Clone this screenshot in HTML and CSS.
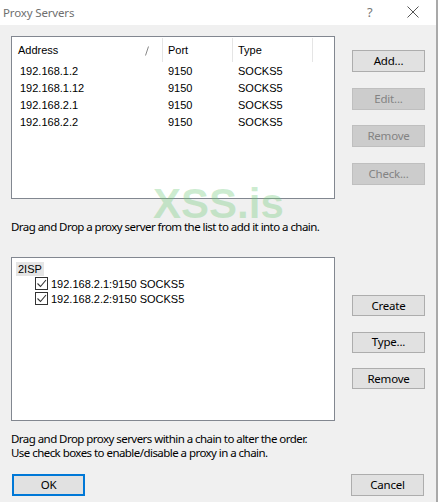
FILE: index.html
```html
<!DOCTYPE html>
<html>
<head>
<meta charset="utf-8">
<link rel="stylesheet" href="styles.css">
</head>
<body>
<div class="window">
  <div class="titlebar">
    <span class="title">Proxy Servers</span>
    <span class="help">?</span>
    <svg class="close" width="12" height="12" viewBox="0 0 12 12"><path d="M0.5 0.5 L11.5 11.5 M11.5 0.5 L0.5 11.5" stroke="#555" stroke-width="1" fill="none"/></svg>
  </div>
  <div class="content">
    <div class="section">
      <div class="listbox list-top">
        <div class="lv-header">
          <div class="col c-addr">Address<svg class="sort" width="4" height="10" viewBox="0 0 4 10"><path d="M3.5 0.5 L0.5 9.5" stroke="#888" stroke-width="1" fill="none"/></svg></div>
          <div class="col c-port">Port</div>
          <div class="col c-type">Type</div>
          <div class="col c-rest"></div>
        </div>
        <div class="lv-row"><span class="c-addr">192.168.1.2</span><span class="c-port">9150</span><span class="c-type">SOCKS5</span></div>
        <div class="lv-row"><span class="c-addr">192.168.1.12</span><span class="c-port">9150</span><span class="c-type">SOCKS5</span></div>
        <div class="lv-row"><span class="c-addr">192.168.2.1</span><span class="c-port">9150</span><span class="c-type">SOCKS5</span></div>
        <div class="lv-row"><span class="c-addr">192.168.2.2</span><span class="c-port">9150</span><span class="c-type">SOCKS5</span></div>
      </div>
      <div class="buttons btns-top">
        <button class="btn">Add...</button>
        <button class="btn disabled">Edit...</button>
        <button class="btn disabled">Remove</button>
        <button class="btn disabled">Check...</button>
      </div>
    </div>
    <p class="hint hint-top">Drag and Drop a proxy server from the list to add it into a chain.</p>
    <div class="section">
      <div class="listbox list-bottom">
        <div class="tree-root"><span class="root-label">2ISP</span></div>
        <div class="tree-item"><span class="chk"><svg width="11" height="11" viewBox="0 0 11 11"><path d="M1.5 5.5 L4.5 8.5 L10 2" stroke="#333" stroke-width="1.1" fill="none"/></svg></span><span class="item-text">192.168.2.1:9150 SOCKS5</span></div>
        <div class="tree-item"><span class="chk"><svg width="11" height="11" viewBox="0 0 11 11"><path d="M1.5 5.5 L4.5 8.5 L10 2" stroke="#333" stroke-width="1.1" fill="none"/></svg></span><span class="item-text">192.168.2.2:9150 SOCKS5</span></div>
      </div>
      <div class="buttons btns-bottom">
        <button class="btn small">Create</button>
        <button class="btn small">Type...</button>
        <button class="btn small">Remove</button>
      </div>
    </div>
    <p class="hint hint-bottom">Drag and Drop proxy servers within a chain to alter the order.<br>Use check boxes to enable/disable a proxy in a chain.</p>
    <div class="footer">
      <button class="btn ok">OK</button>
      <button class="btn">Cancel</button>
    </div>
  </div>
  <div class="watermark">XSS.is</div>
</div>
</body>
</html>
```

FILE: styles.css
```css
* { box-sizing: border-box; }
html, body { margin: 0; padding: 0; }
body {
  width: 438px;
  height: 502px;
  background: #f0f0f0;
  font-family: "Noto Sans", "Open Sans", sans-serif;
  font-size: 11.5px;
  color: #000;
  overflow: hidden;
}
.window {
  position: relative;
  width: 438px;
  height: 502px;
  border-right: 2px solid #a9a9a9;
}
.titlebar {
  height: 25px;
  background: #fff;
  display: flex;
  align-items: center;
  padding-left: 3px;
  position: relative;
}
.title {
  color: #6f6f6f;
  font-size: 11.5px;
  letter-spacing: -0.15px;
  flex: 1;
  margin-top: -1px;
}
.help {
  color: #777;
  font-size: 13px;
  width: 10px;
  margin-right: 30px;
  margin-top: -2px;
}
.close { margin-right: 17px; margin-top: -1px; }
.content {
  padding: 11px 0 0 11px;
}
.section {
  display: flex;
  align-items: flex-start;
}
.listbox {
  width: 324px;
  background: #fff;
  border: 1px solid #828790;
}
.list-top { height: 163px; }
.list-bottom { height: 164px; padding: 3px 0 0 4px; }
.lv-header {
  display: flex;
  height: 26px;
  font-family: "Liberation Sans", Arial, sans-serif;
  font-size: 11px;
}
.lv-header .col {
  position: relative;
  display: flex;
  align-items: center;
  border-right: 1px solid #e5e5e5;
  margin: 1px 0 1px 0;
  padding-left: 6px;
}
.c-addr { width: 151px; }
.c-port { width: 70px; }
.c-type { width: 80px; }
.lv-header .c-addr { width: 151px; }
.lv-header .c-port { width: 70px; padding-left: 5px; }
.lv-header .c-type { width: 80px; padding-left: 5px; }
.lv-header .c-rest { border-right: none; }
.sort { position: absolute; left: 133px; top: 8px; }
.lv-row {
  display: flex;
  height: 17px;
  line-height: 17px;
  font-family: "Liberation Sans", Arial, sans-serif;
  font-size: 11px;
}
.lv-row .c-addr { padding-left: 8px; }
.lv-row .c-port { padding-left: 5px; }
.lv-row .c-type { padding-left: 5px; }
.buttons {
  display: flex;
  flex-direction: column;
  margin-left: 17px;
}
.btns-top { padding-top: 14px; gap: 15.5px; }
.btns-bottom { padding-top: 38px; gap: 15.5px; }
.btn {
  width: 73px;
  height: 22px;
  background: #e1e1e1;
  border: 1px solid #adadad;
  font-family: "Noto Sans", "Open Sans", sans-serif;
  font-size: 11.5px;
  letter-spacing: -0.2px;
  color: #000;
  padding: 0;
  line-height: 18px;
}
.btn.small { height: 21px; }
.btn.disabled {
  background: #cccccc;
  border-color: #bfbfbf;
  color: #838383;
}
.hint {
  margin: 0;
  font-size: 11.5px;
  letter-spacing: -0.55px;
  line-height: 14px;
}
.hint-top { margin-top: 21px; margin-bottom: 23px; }
.hint-bottom { margin-top: 11px; }
.tree-root {
  height: 15px;
  display: flex;
  align-items: center;
}
.root-label {
  background: #e5e5e5;
  padding: 0 2px 0 2px;
  height: 14px;
  line-height: 14px;
  font-family: "Liberation Sans", Arial, sans-serif;
  font-size: 11px;
}
.tree-item {
  height: 15px;
  display: flex;
  align-items: center;
  padding-left: 19px;
  font-family: "Liberation Sans", Arial, sans-serif;
  font-size: 11px;
}
.chk {
  width: 13px;
  height: 13px;
  border: 1px solid #333;
  background: #fff;
  display: flex;
  align-items: center;
  justify-content: center;
  margin-right: 3px;
}
.footer {
  display: flex;
  justify-content: space-between;
  width: 413px;
  margin-top: 14px;
}
.btn.ok {
  border: 2px solid #0078d7;
  margin-left: 1px;
}
.watermark {
  position: absolute;
  left: 153px;
  top: 183px;
  font-family: "Liberation Sans", Arial, sans-serif;
  font-weight: bold;
  font-size: 42px;
  line-height: 42px;
  color: rgba(110, 200, 120, 0.35);
  pointer-events: none;
}
```
